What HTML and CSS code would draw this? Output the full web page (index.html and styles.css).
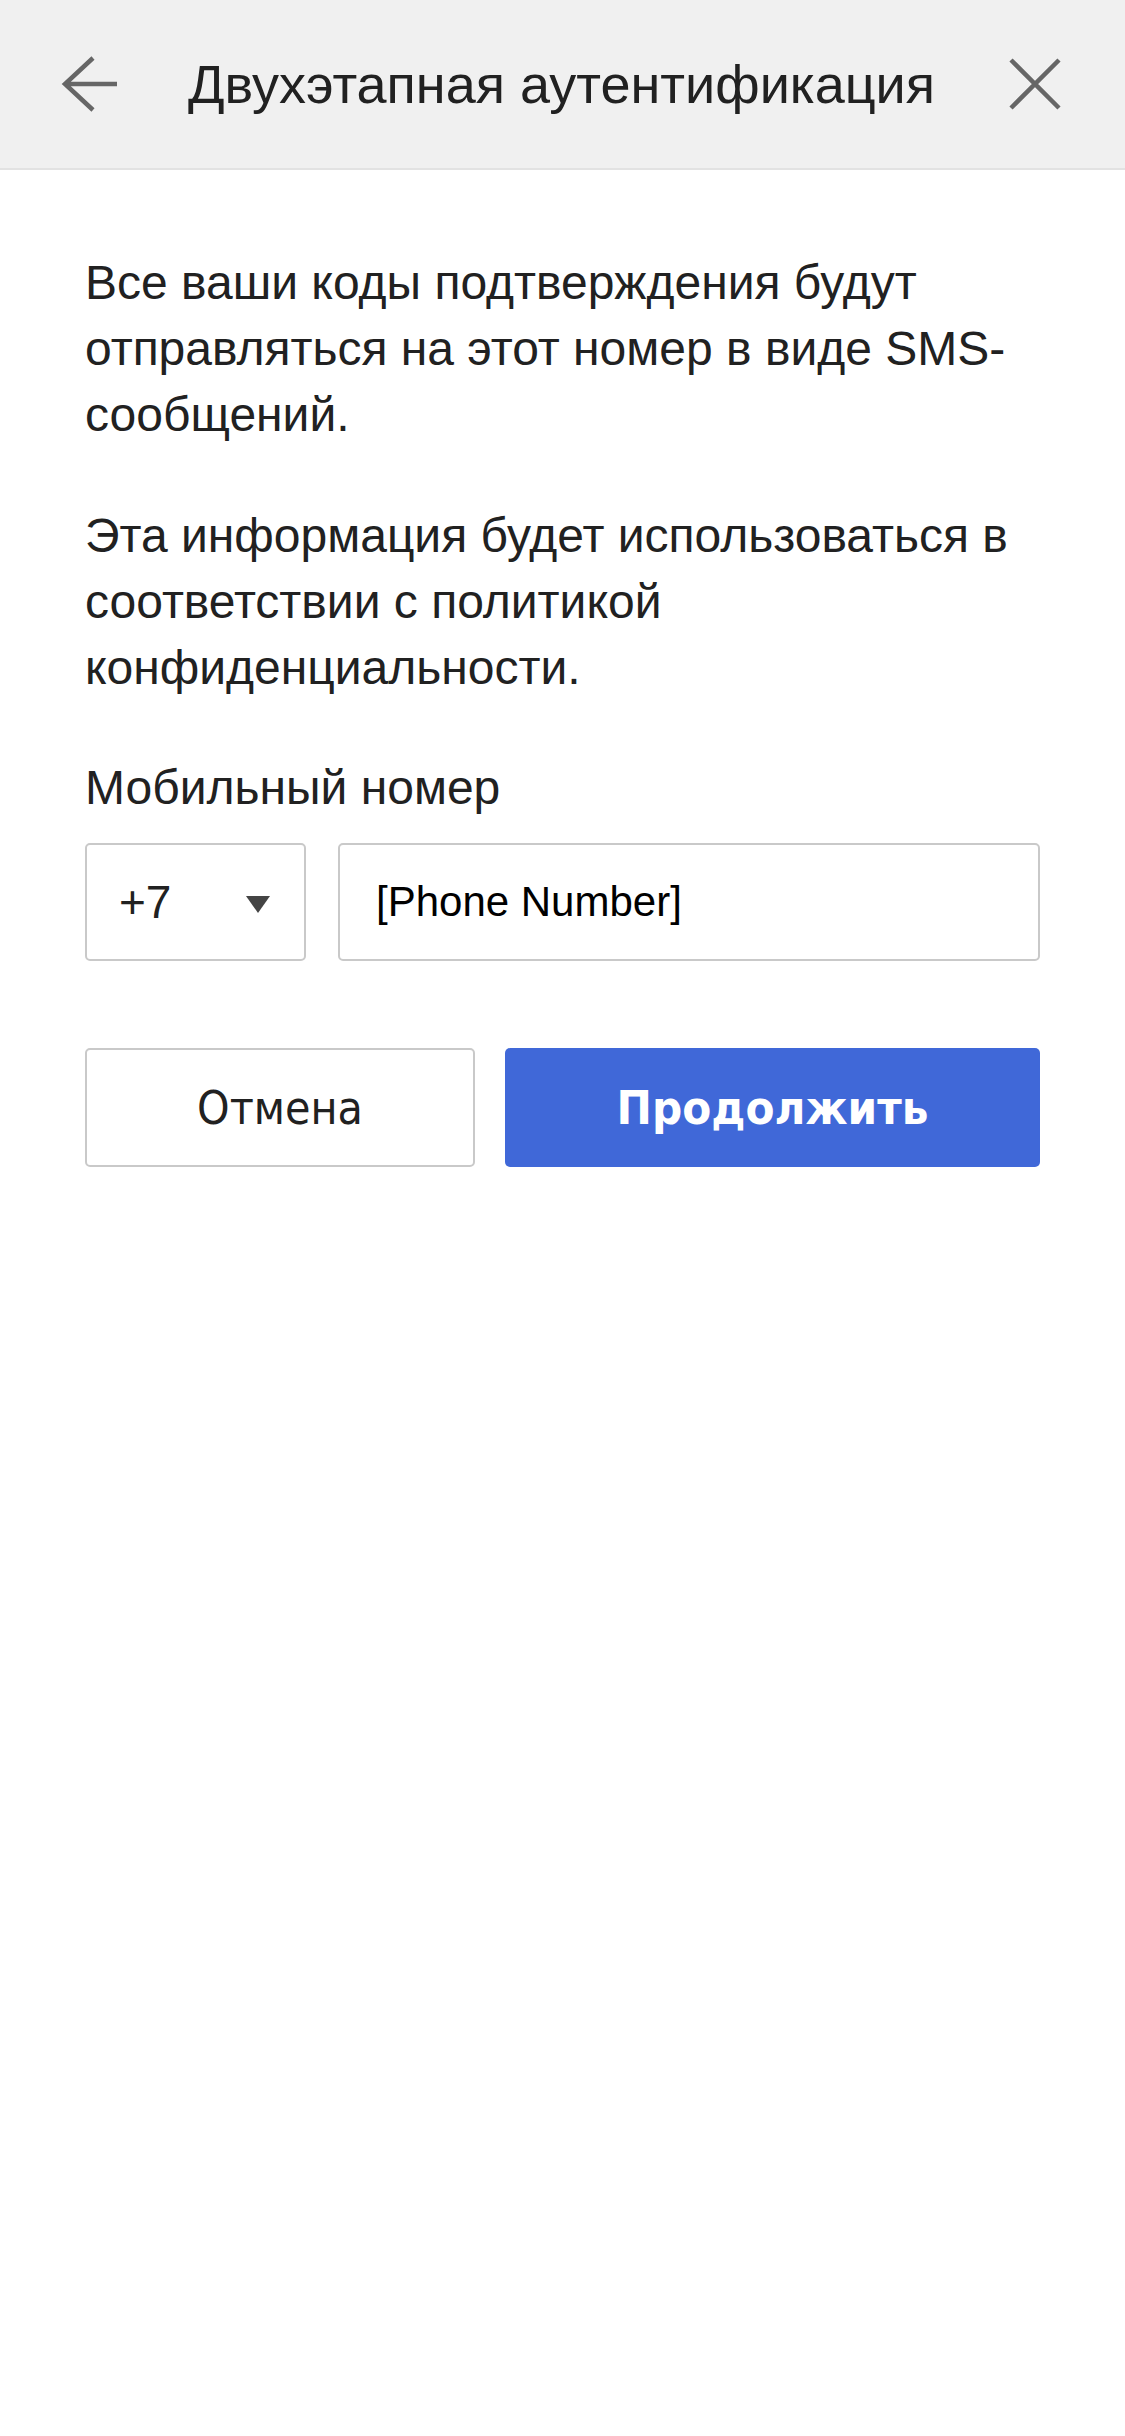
FILE: index.html
```html
<!DOCTYPE html>
<html lang="ru">
<head>
<meta charset="utf-8">
<title>Двухэтапная аутентификация</title>
<link rel="stylesheet" href="styles.css">
</head>
<body>
<header class="topbar">
  <button class="icon-btn back" aria-label="Назад">
    <svg viewBox="0 0 60 60" width="60" height="60"><path d="M33 4 L5 30 L33 56 M5 30 H57" fill="none" stroke="#666" stroke-width="4.5"/></svg>
  </button>
  <h1 class="title">Двухэтапная аутентификация</h1>
  <button class="icon-btn close" aria-label="Закрыть">
    <svg viewBox="0 0 60 60" width="60" height="60"><path d="M6 6 L54 54 M54 6 L6 54" fill="none" stroke="#666" stroke-width="4.5"/></svg>
  </button>
</header>
<main class="content">
  <p class="text">Все ваши коды подтверждения будут отправляться на этот номер в виде SMS-сообщений.</p>
  <p class="text">Эта информация будет использоваться в соответствии с политикой конфиденциальности.</p>
  <label class="text label">Мобильный номер</label>
  <div class="phone-row">
    <div class="country">
      <span class="code">+7</span>
      <span class="caret"></span>
    </div>
    <div class="phone">[Phone Number]</div>
  </div>
  <div class="actions">
    <button class="btn cancel">Отмена</button>
    <button class="btn primary">Продолжить</button>
  </div>
</main>
</body>
</html>
```

FILE: styles.css
```css
* { box-sizing: border-box; }
html, body { margin: 0; padding: 0; background: #fff; }
body {
  font-family: "Liberation Sans", Arial, sans-serif;
  color: #212121;
  width: 1125px;
  min-height: 2436px;
}
.topbar {
  height: 170px;
  background: #f0f0f0;
  border-bottom: 2px solid #e2e2e2;
  display: flex;
  align-items: center;
  padding: 0 60px 0 60px;
}
.icon-btn {
  width: 60px;
  height: 60px;
  padding: 0;
  margin: 0;
  border: 0;
  background: transparent;
  display: flex;
}
.icon-btn svg { display: block; }
.title {
  flex: 1;
  margin: 0 0 0 68px;
  font-size: 54px;
  font-weight: normal;
  color: #212121;
  line-height: 60px;
  white-space: nowrap;
}
.content {
  padding: 80px 85px 0 85px;
}
.text {
  display: block;
  margin: 0 0 55px 0;
  font-size: 48px;
  line-height: 66px;
}
.text + .text { margin-bottom: 54px; }
.text.label { margin-bottom: 22px; }
.phone-row {
  display: flex;
  gap: 32px;
  height: 118px;
}
.country, .phone {
  border: 2px solid #c9c9c9;
  border-radius: 5px;
  display: flex;
  align-items: center;
}
.country {
  width: 221px;
  padding: 0 34px 0 32px;
  justify-content: space-between;
}
.code { font-size: 46px; color: #212121; }
.caret {
  width: 0;
  height: 0;
  border-left: 12px solid transparent;
  border-right: 12px solid transparent;
  border-top: 17px solid #444;
  margin-top: 4px;
}
.phone {
  flex: 1;
  padding-left: 36px;
  font-size: 42px;
  color: #000;
}
.actions {
  display: flex;
  gap: 30px;
  margin-top: 87px;
  height: 119px;
}
.btn {
  margin: 0;
  border-radius: 5px;
  font-family: "DejaVu Sans Condensed", "DejaVu Sans", sans-serif;
  font-stretch: condensed;
  font-size: 46px;
  cursor: pointer;
}
.cancel {
  flex: 0 0 390px;
  background: #fff;
  border: 2px solid #c9c9c9;
  color: #212121;
}
.primary {
  flex: 1;
  background: #4068d8;
  border: 0;
  color: #fff;
  font-weight: bold;
  font-size: 47px;
}
```
